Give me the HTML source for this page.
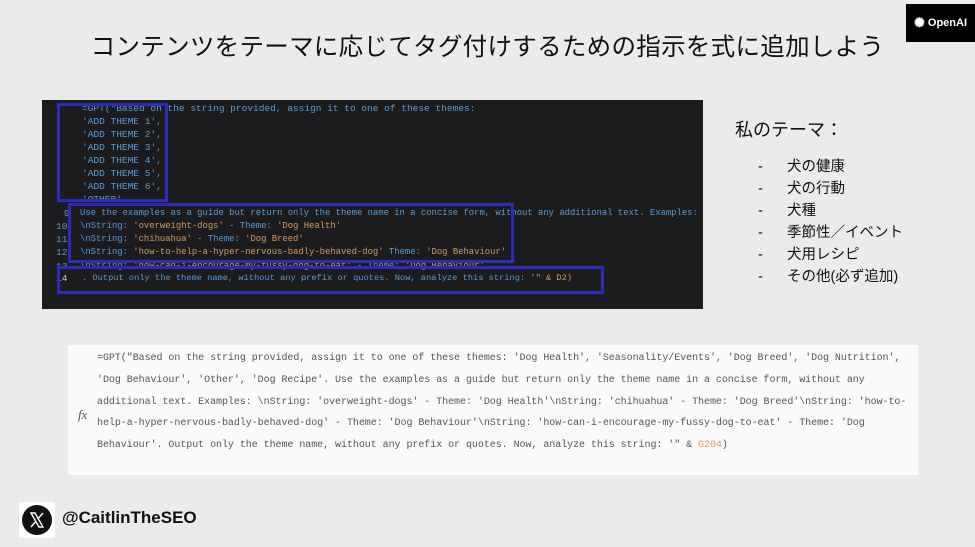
<!DOCTYPE html>
<html><head><meta charset="utf-8"><style>
body{margin:0;width:975px;height:547px;background:#ebebeb;position:relative;overflow:hidden;font-family:"Liberation Sans","Noto Sans CJK JP",sans-serif}
.abs{position:absolute}
.title{left:0;width:975px;top:28px;text-align:center;font-size:24.5px;color:#111;letter-spacing:0.3px}
.oa{left:906px;top:4px;width:69px;height:38px;background:#000;color:#fff;font-size:11px;font-weight:bold;display:flex;align-items:center;justify-content:center;gap:3px}
.code{left:42px;top:100px;width:661px;height:209px;background:#1c1c1f}
.code div{position:absolute;font-family:"Liberation Mono",monospace;font-size:9.5px;white-space:pre;color:#5a9bd5}
.s{color:#d19a66}
.n{color:#6a6a6a}
.box{position:absolute;border:3px solid #2c2cb8;box-sizing:border-box}
.h{left:735px;top:116px;font-size:18px;color:#111}
.li{font-size:14.5px;color:#111}
.fp{left:68px;top:345px;width:850px;height:130px;background:#fafafa}
.fp div{position:absolute;left:29px;font-family:"Liberation Mono",monospace;font-size:10px;color:#555;white-space:pre;letter-spacing:-0.05px}
.handle{left:62px;top:508px;font-size:17px;font-weight:bold;color:#111}
</style></head><body>
<div class="abs title">コンテンツをテーマに応じてタグ付けするための指示を式に追加しよう</div>
<div class="abs oa"><span style="font-size:13px">✺</span>OpenAI</div>

<div class="abs code">
<div style="left:40px;top:3px">=GPT("Based on the string provided, assign it to one of these themes:</div>
<div class="s" style="left:40px;top:16px">'ADD THEME 1',</div>
<div class="s" style="left:40px;top:29px">'ADD THEME 2',</div>
<div class="s" style="left:40px;top:42px">'ADD THEME 3',</div>
<div class="s" style="left:40px;top:55px">'ADD THEME 4',</div>
<div class="s" style="left:40px;top:68px">'ADD THEME 5',</div>
<div class="s" style="left:40px;top:81px">'ADD THEME 6',</div>
<div class="s" style="left:40px;top:94px">'OTHER'</div>
<div class="n" style="left:16px;top:108px"> 9</div>
<div style="left:38px;top:108px;font-size:8.9px">Use the examples as a guide but return only the theme name in a concise form, without any additional text. Examples:</div>
<div class="n" style="left:14px;top:121px">10</div>
<div style="left:38px;top:121px;font-size:8.9px">\nString: <span class="s">'overweight-dogs'</span> - Theme: <span class="s">'Dog Health'</span></div>
<div class="n" style="left:14px;top:134px">11</div>
<div style="left:38px;top:134px;font-size:8.9px">\nString: <span class="s">'chihuahua'</span> - Theme: <span class="s">'Dog Breed'</span></div>
<div class="n" style="left:14px;top:147px">12</div>
<div style="left:38px;top:147px;font-size:8.9px">\nString: <span class="s">'how-to-help-a-hyper-nervous-badly-behaved-dog'</span> Theme: <span class="s">'Dog Behaviour'</span></div>
<div class="n" style="left:14px;top:161px">13</div>
<div style="left:38px;top:161px;font-size:8.9px">\nString: <span class="s">'how-can-i-encourage-my-fussy-dog-to-eat'</span> - Theme: <span class="s">'Dog Behaviour'</span></div>
<div class="n" style="left:14px;top:173px;color:#ccc">14</div>
<div style="left:40px;top:173px;font-size:8.7px">. Output only the theme name, without any prefix or quotes. Now, analyze this string: <span class="s">'" &amp; D2)</span></div>
<div class="box" style="left:15px;top:3px;width:111px;height:99px"></div>
<div class="box" style="left:26px;top:103px;width:446px;height:60px"></div>
<div class="box" style="left:15px;top:166px;width:547px;height:28px"></div>
</div>

<div class="abs h">私のテーマ：</div>
<div class="abs li" style="left:758px;top:156px;line-height:22px">-<br>-<br>-<br>-<br>-<br>-</div>
<div class="abs li" style="left:787px;top:156px;line-height:22px">犬の健康<br>犬の行動<br>犬種<br>季節性／イベント<br>犬用レシピ<br>その他(必ず追加)</div>

<div class="abs fp">
<div style="top:8px">=GPT("Based on the string provided, assign it to one of these themes: 'Dog Health', 'Seasonality/Events', 'Dog Breed', 'Dog Nutrition',</div>
<div style="top:30px">'Dog Behaviour', 'Other', 'Dog Recipe'. Use the examples as a guide but return only the theme name in a concise form, without any</div>
<div style="top:52px">additional text. Examples: \nString: 'overweight-dogs' - Theme: 'Dog Health'\nString: 'chihuahua' - Theme: 'Dog Breed'\nString: 'how-to-</div>
<div style="top:73px">help-a-hyper-nervous-badly-behaved-dog' - Theme: 'Dog Behaviour'\nString: 'how-can-i-encourage-my-fussy-dog-to-eat' - Theme: 'Dog</div>
<div style="top:95px">Behaviour'. Output only the theme name, without any prefix or quotes. Now, analyze this string: '" &amp; <span style="color:#e8955a">G204</span>)</div>
<div style="left:10px;top:62px;font-family:'Liberation Serif',serif;font-style:italic;font-size:13px">fx</div>
</div>

<div class="abs" style="left:19px;top:502px;width:36px;height:36px;background:#fff"></div>
<div class="abs" style="left:22px;top:505px;width:30px;height:30px;border-radius:50%;background:#111">
<svg width="30" height="30" viewBox="0 0 30 30"><path d="M9 8h4l8 14h-4z" fill="none" stroke="#fff" stroke-width="1.4"/><path d="M21 8l-5.5 6.3M9 22l5.2-6" stroke="#fff" stroke-width="1.4"/></svg>
</div>
<div class="abs handle">@CaitlinTheSEO</div>
</body></html>
